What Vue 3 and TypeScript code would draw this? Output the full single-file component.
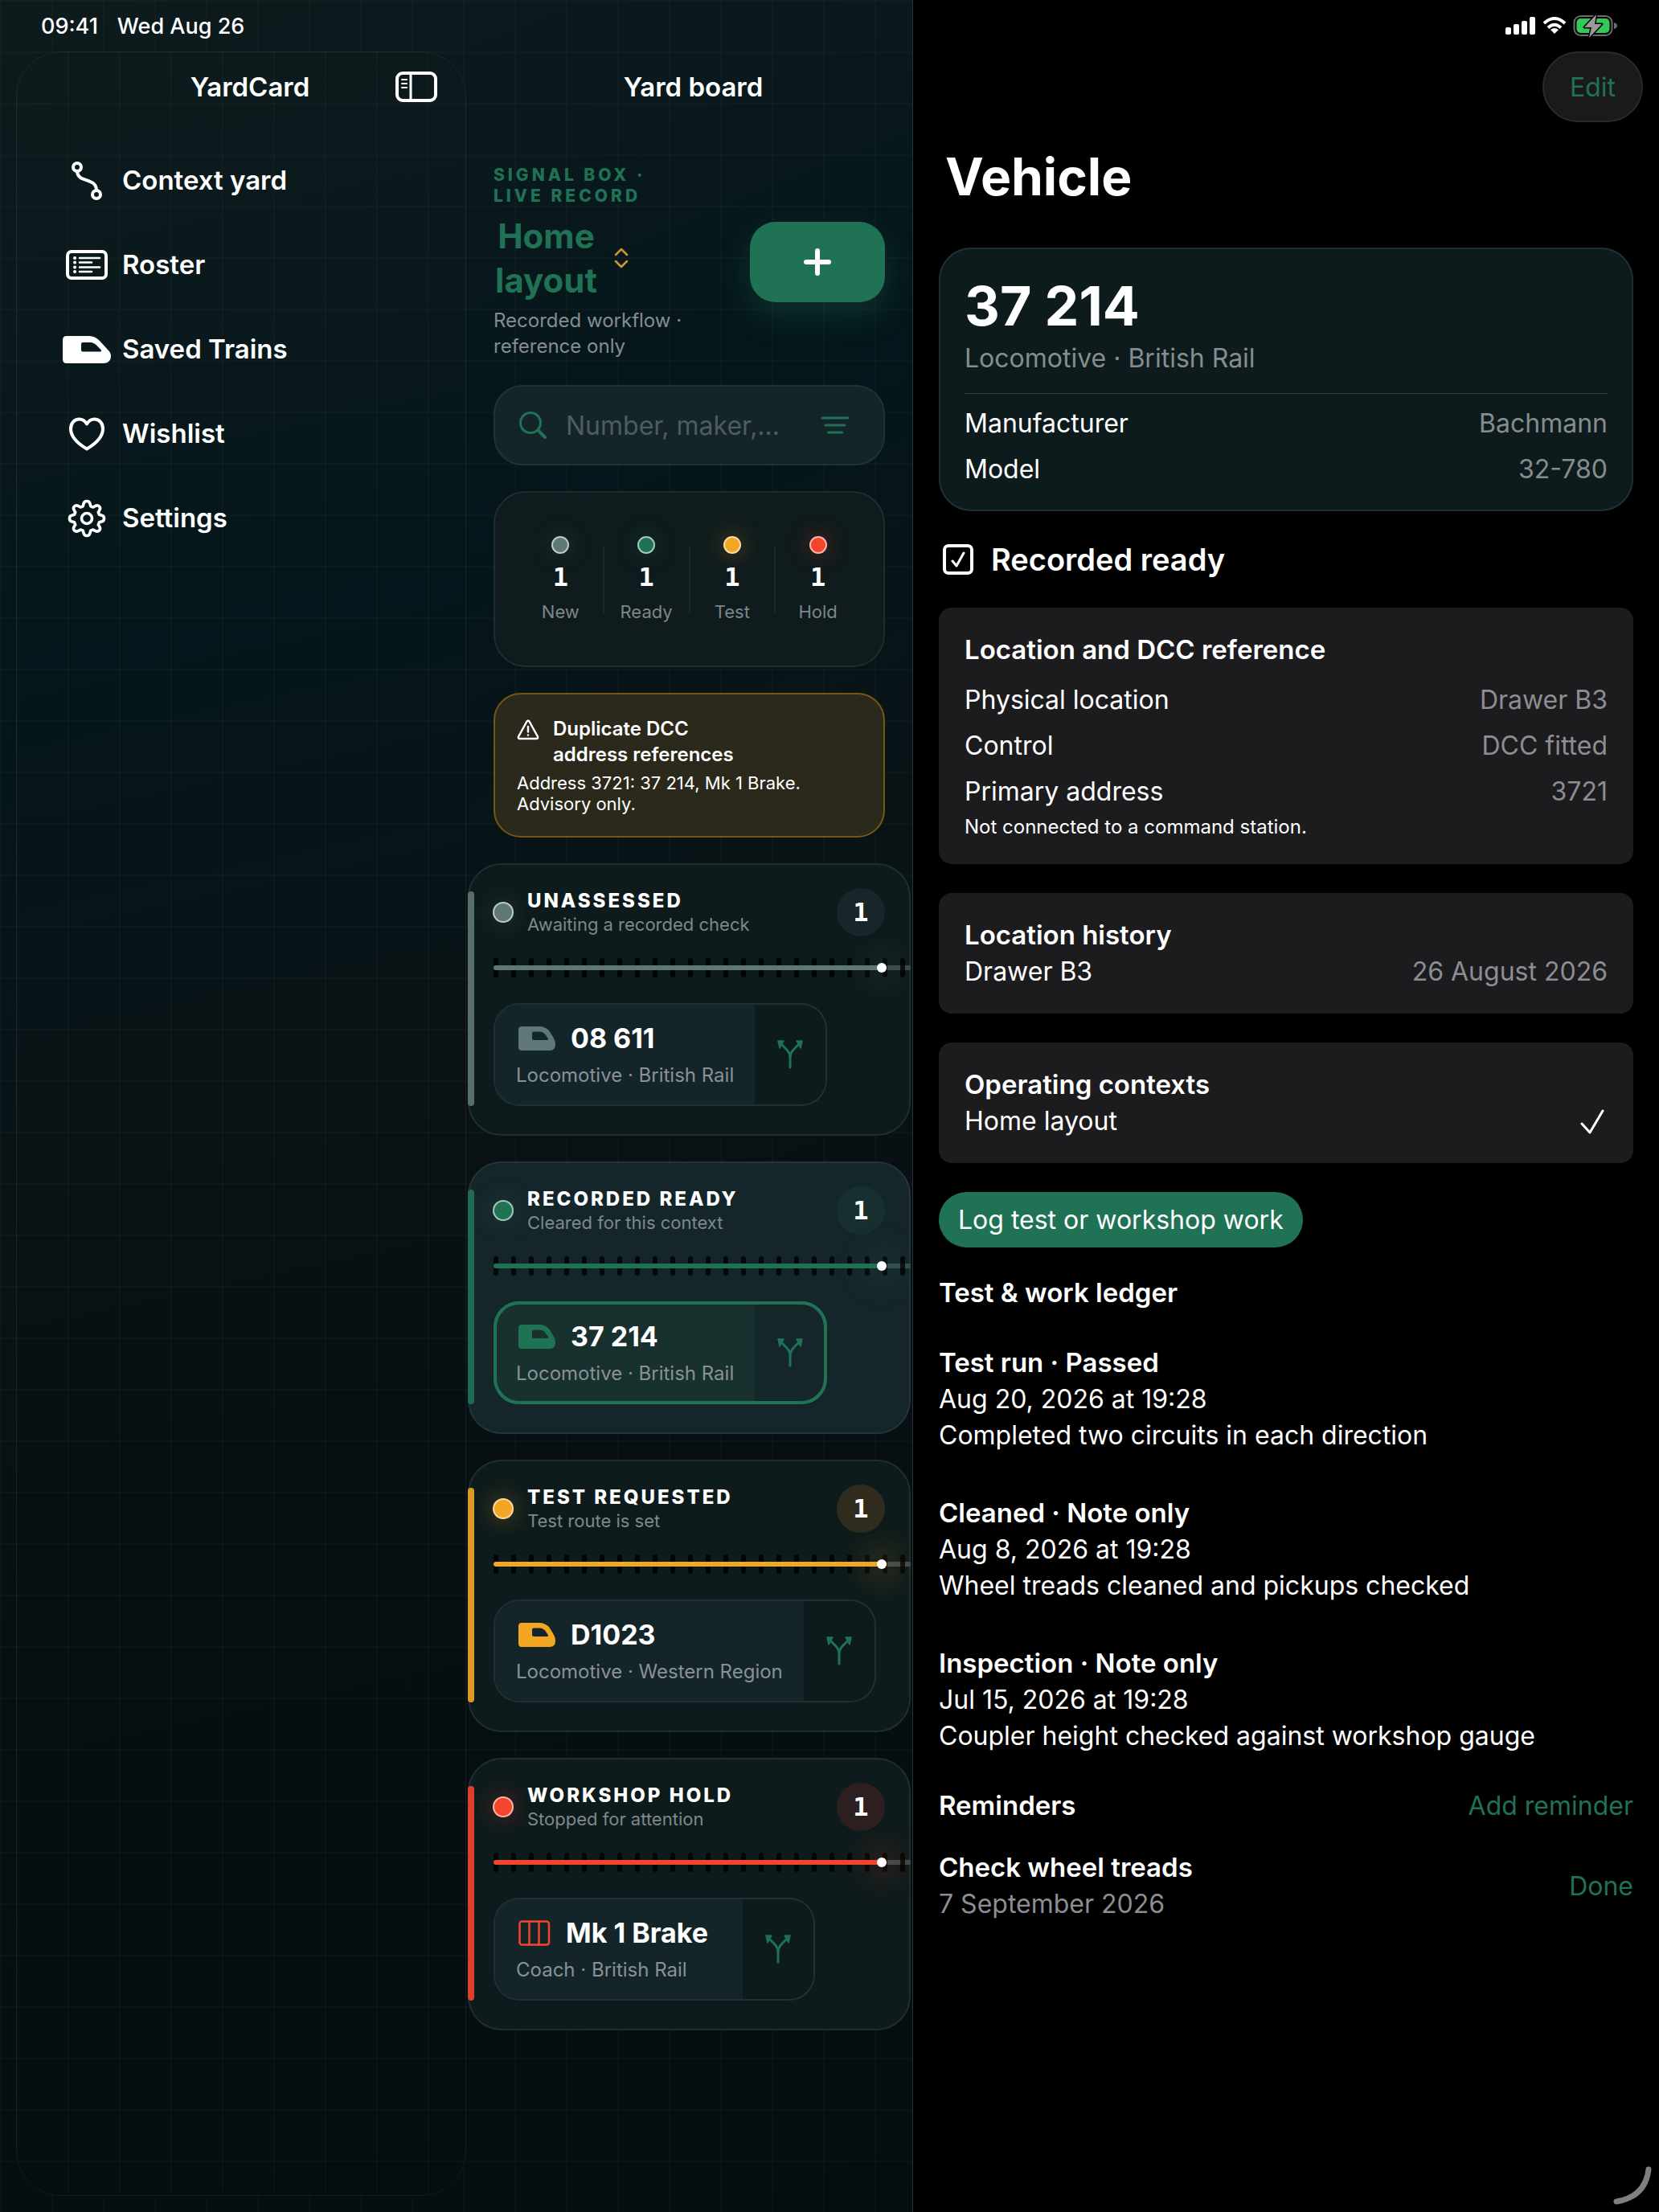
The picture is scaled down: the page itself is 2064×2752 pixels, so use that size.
<script setup lang="ts">
import { ref } from 'vue'

type Tone = 'grey' | 'green' | 'amber' | 'red'

interface Vehicle {
  number: string
  detail: string
  kind: 'loco' | 'coach'
}

interface Lane {
  title: string
  note: string
  short: string
  tone: Tone
  selected: boolean
  vehicle: Vehicle
}

const navItems = [
  { id: 'route', label: 'Context yard' },
  { id: 'roster', label: 'Roster' },
  { id: 'train', label: 'Saved Trains' },
  { id: 'heart', label: 'Wishlist' },
  { id: 'gear', label: 'Settings' },
]

const lanes: Lane[] = [
  {
    title: 'UNASSESSED', note: 'Awaiting a recorded check', short: 'New', tone: 'grey', selected: false,
    vehicle: { number: '08 611', detail: 'Locomotive · British Rail', kind: 'loco' },
  },
  {
    title: 'RECORDED READY', note: 'Cleared for this context', short: 'Ready', tone: 'green', selected: true,
    vehicle: { number: '37 214', detail: 'Locomotive · British Rail', kind: 'loco' },
  },
  {
    title: 'TEST REQUESTED', note: 'Test route is set', short: 'Test', tone: 'amber', selected: false,
    vehicle: { number: 'D1023', detail: 'Locomotive · Western Region', kind: 'loco' },
  },
  {
    title: 'WORKSHOP HOLD', note: 'Stopped for attention', short: 'Hold', tone: 'red', selected: false,
    vehicle: { number: 'Mk 1 Brake', detail: 'Coach · British Rail', kind: 'coach' },
  },
]

const reference = [
  { name: 'Physical location', value: 'Drawer B3' },
  { name: 'Control', value: 'DCC fitted' },
  { name: 'Primary address', value: '3721' },
]

const ledger = [
  { title: 'Test run · Passed', when: 'Aug 20, 2026 at 19:28', text: 'Completed two circuits in each direction' },
  { title: 'Cleaned · Note only', when: 'Aug 8, 2026 at 19:28', text: 'Wheel treads cleaned and pickups checked' },
  { title: 'Inspection · Note only', when: 'Jul 15, 2026 at 19:28', text: 'Coupler height checked against workshop gauge' },
]

const query = ref('')
const ready = ref(true)
</script>

<template>
  <div class="app">
    <div class="yard">
      <header class="status">
        <span>09:41</span>
        <span>Wed Aug 26</span>
      </header>

      <div class="yard-body">
        <aside class="sidebar">
          <div class="sidebar-head">
            <h2 class="bar-title sidebar-title">YardCard</h2>
            <button class="plain toggle" type="button" aria-label="Toggle sidebar">
              <svg width="52" height="42" viewBox="0 0 52 42" fill="none" stroke="#fff" stroke-linecap="round">
                <rect x="2" y="4" width="48" height="34" rx="7" stroke-width="4" />
                <path d="M19 4v34" stroke-width="3" />
                <path d="M8 12h6M8 17h6M8 22h6" stroke-width="2" />
              </svg>
            </button>
          </div>
          <nav class="nav">
            <a v-for="item in navItems" :key="item.id" class="nav-item" href="#">
              <span class="nav-icon">
                <svg v-if="item.id === 'route'" width="40" height="48" viewBox="0 0 40 48" fill="none" stroke="#fff" stroke-width="4">
                  <circle cx="8" cy="7" r="5" />
                  <circle cx="32" cy="41" r="5" />
                  <path d="M8 12c0 15 24 7 24 24" />
                </svg>
                <svg v-else-if="item.id === 'roster'" width="52" height="42" viewBox="0 0 52 42" fill="none" stroke="#fff" stroke-linecap="round">
                  <rect x="2" y="4" width="48" height="33" rx="5" stroke-width="4" />
                  <path d="M17 12h25M17 17.500h15M17 23.500h25M17 29h15" stroke-width="2.500" />
                  <path d="M11 12h.1M11 17.500h.1M11 23.500h.1M11 29h.1" stroke-width="4" />
                </svg>
                <svg v-else-if="item.id === 'train'" width="60" height="34" viewBox="0 0 60 34" fill="#fff">
                  <path fill-rule="evenodd" d="M5 0H33C38 0 42 2 46 6L56 17C59 20 60 22 60 25C60 31 56 34 50 34H5Q0 34 0 29V5Q0 0 5 0ZM25 8Q23 8 23 10V17.500Q23 19.500 25 19.500H46.500Q49 19 47.500 17L42 11.500Q38.500 8 34.500 8Z" />
                </svg>
                <svg v-else-if="item.id === 'heart'" width="46" height="42" viewBox="0 0 46 42" fill="none" stroke="#fff" stroke-width="4" stroke-linejoin="round">
                  <path d="M23 39.500C12 33 3 24.500 3 14.500C3 7.500 7.500 2.500 13.500 2.500C17.500 2.500 21 5 23 8.500C25 5 28.500 2.500 32.500 2.500C38.500 2.500 43 7.500 43 14.500C43 24.500 34 33 23 39.500Z" />
                </svg>
                <svg v-else width="48" height="48" viewBox="0 0 48 48" fill="none" stroke="#fff" stroke-width="3.600" stroke-linejoin="round">
                  <path d="M20 6Q20.500 2.500 24 2.500T28 6L28.800 8.800L31.800 10L34.300 8.600Q37.500 7 39.500 9T39.800 13.700L38.200 16.200L39.400 19.200L42.200 20Q45.500 20.500 45.500 24T42.200 28L39.400 28.800L38.200 31.800L39.800 34.300Q41.500 37 39.500 39T34.300 39.400L31.800 38L28.800 39.200L28 42Q27.500 45.500 24 45.500T20 42L19.200 39.200L16.200 38L13.700 39.400Q10.500 41 8.500 39T8.200 34.300L9.800 31.800L8.600 28.800L5.800 28Q2.500 27.500 2.500 24T5.800 20L8.600 19.200L9.800 16.200L8.200 13.700Q6.500 11 8.500 9T13.700 8.600L16.200 10L19.200 8.800Z" />
                  <circle cx="24" cy="24" r="6.500" />
                </svg>
              </span>
              {{ item.label }}
            </a>
          </nav>
        </aside>

        <main class="board">
          <h1 class="bar-title board-title">Yard board</h1>

          <section class="intro">
            <div>
              <p class="eyebrow">SIGNAL BOX ·<br>LIVE RECORD</p>
              <button class="plain context" type="button">
                <span>Home<br>layout</span>
                <svg width="20" height="26" viewBox="0 0 20 26" fill="none" stroke="#c9973c" stroke-width="2.500" stroke-linecap="round" stroke-linejoin="round">
                  <path d="M3 9l7-7 7 7M3 17l7 7 7-7" />
                </svg>
              </button>
              <p class="caption muted">Recorded workflow ·<br>reference only</p>
            </div>
            <button class="add" type="button" aria-label="Add vehicle">
              <svg width="36" height="36" viewBox="0 0 36 36" stroke="#fff" stroke-width="6" stroke-linecap="round">
                <path d="M18 4v28M4 18h28" />
              </svg>
            </button>
          </section>

          <form class="search" @submit.prevent>
            <svg width="34" height="34" viewBox="0 0 34 34" fill="none" stroke="#207255" stroke-width="3" stroke-linecap="round">
              <circle cx="14" cy="14" r="12.500" />
              <path d="M23.500 23.500l8.500 8.500" stroke-width="4" />
            </svg>
            <input v-model="query" type="text" placeholder="Number, maker,…" aria-label="Search the yard">
            <button class="plain" type="button" aria-label="Filter">
              <svg width="36" height="24" viewBox="0 0 36 24" stroke="#207255" stroke-width="3" stroke-linecap="round">
                <path d="M2 3h32M6 12h24M9.500 21h17" />
              </svg>
            </button>
          </form>

          <dl class="stats">
            <div v-for="lane in lanes" :key="lane.short" class="stat">
              <dt>{{ lane.short }}</dt>
              <dd>1</dd>
              <span class="lamp small" :class="lane.tone"></span>
            </div>
          </dl>

          <section class="alert">
            <h3>
              <svg width="28" height="26" viewBox="0 0 28 26" fill="none" stroke="#fff" stroke-width="2.500" stroke-linecap="round" stroke-linejoin="round">
                <path d="M12.500 2.500Q14 .5 15.500 2.500L26 21.500Q26.500 24 24.500 24H3.500Q1.500 24 2 21.500Z" />
                <path d="M14 9v6.500M14 19.500v.1" />
              </svg>
              <span>Duplicate DCC<br>address references</span>
            </h3>
            <p>Address 3721: 37 214, Mk 1 Brake.<br>Advisory only.</p>
          </section>

          <section v-for="lane in lanes" :key="lane.title" class="lane" :class="[lane.tone, { selected: lane.selected }]">
            <header class="lane-head">
              <span class="lamp" :class="lane.tone"></span>
              <div class="lane-text">
                <h3>{{ lane.title }}</h3>
                <p>{{ lane.note }}</p>
              </div>
              <span class="badge">1</span>
            </header>
            <div class="rail">
              <div class="ties"><i v-for="n in 24" :key="n"></i></div>
              <div class="run"></div>
            </div>
            <div class="chip">
              <button class="plain chip-main" type="button">
                <span class="chip-title">
                  <svg v-if="lane.vehicle.kind === 'loco'" class="tint" width="52" height="32" viewBox="0 0 52 32">
                    <path fill-rule="evenodd" d="M7 1H29C34 1 38 3 41 6L46.500 15Q49 19 49 23Q49 31 42 31H7Q3 31 3 27V5Q3 1 7 1ZM22 7.500Q20 7.500 20 9.500V16Q20 18 22 18H38.500Q41 18 39.500 15.500L36 10.500Q33 7.500 30 7.500Z" />
                  </svg>
                  <svg v-else class="tint-line" width="46" height="32" viewBox="0 0 46 32" fill="none" stroke-width="2.500">
                    <rect x="4.500" y="1.500" width="36.500" height="29" rx="3" />
                    <path d="M16.500 1.500v29M28.500 1.500v29" />
                  </svg>
                  {{ lane.vehicle.number }}
                </span>
                <span class="chip-detail">{{ lane.vehicle.detail }}</span>
              </button>
              <button class="plain chip-move" type="button" aria-label="Move to another lane">
                <svg width="32" height="36" viewBox="0 0 32 36" fill="none" stroke="#207255" stroke-width="3" stroke-linecap="round">
                  <path d="M16 34V22Q16 16 11 11L6 6M16 22Q16 16 21 11L26 6" />
                  <path d="M1 1H8L3 10ZM31 1H24L29 10Z" fill="#207255" stroke-width="1.500" stroke-linejoin="round" />
                </svg>
              </button>
            </div>
          </section>
        </main>
      </div>
    </div>

    <article class="detail">
      <div class="status status-right">
        <svg width="38" height="24" viewBox="0 0 38 24" fill="#fff">
          <rect x="0" y="14" width="7" height="9" rx="2" />
          <rect x="10" y="10" width="7" height="13" rx="2" />
          <rect x="20" y="6" width="7" height="17" rx="2" />
          <rect x="30" y="1" width="7" height="22" rx="2" />
        </svg>
        <svg width="30" height="22" viewBox="0 0 30 22" fill="none" stroke="#fff" stroke-width="4">
          <path d="M2 8Q15-4 28 8M7 13.500Q15 6 23 13.500" />
          <path d="M15 21l-5-5q5-4 10 0z" fill="#fff" stroke="none" />
        </svg>
        <svg width="56" height="34" viewBox="0 0 56 34">
          <rect x="1.500" y="5" width="47" height="24" rx="8" fill="none" stroke="#6b6b6b" stroke-width="2" />
          <rect x="4.500" y="8" width="41" height="18" rx="5" fill="#34c759" />
          <path d="M51 13q4 1 4 4t-4 4z" fill="#6b6b6b" />
          <path d="M29 3L14 19h9l-3 13L36 15h-9z" fill="#9a9a9a" stroke="#000" stroke-width="3" paint-order="stroke" stroke-linejoin="round" />
        </svg>
      </div>

      <div class="toolbar">
        <button class="edit" type="button">Edit</button>
      </div>
      <h1 class="page-title">Vehicle</h1>

      <div class="stack">
        <section class="hero">
          <h2>37 214</h2>
          <p class="muted">Locomotive · British Rail</p>
          <dl class="rows hero-rows">
            <div><dt>Manufacturer</dt><dd>Bachmann</dd></div>
            <div><dt>Model</dt><dd>32-780</dd></div>
          </dl>
        </section>

        <label class="ready">
          <span class="tick">
            <input v-model="ready" type="checkbox">
            <svg v-if="ready" width="18" height="20" viewBox="0 0 18 20" fill="none" stroke="#fff" stroke-width="3" stroke-linecap="round" stroke-linejoin="round">
              <path d="M2 12l5 6L16 2" />
            </svg>
          </span>
          Recorded ready
        </label>

        <section class="card">
          <h3>Location and DCC reference</h3>
          <dl class="rows reference-rows">
            <div v-for="row in reference" :key="row.name"><dt>{{ row.name }}</dt><dd>{{ row.value }}</dd></div>
          </dl>
          <p class="caption">Not connected to a command station.</p>
        </section>

        <section class="card">
          <h3>Location history</h3>
          <dl class="rows">
            <div><dt>Drawer B3</dt><dd>26 August 2026</dd></div>
          </dl>
        </section>

        <section class="card">
          <h3>Operating contexts</h3>
          <div class="choice">
            <span>Home layout</span>
            <svg width="36" height="32" viewBox="0 0 36 32" fill="none" stroke="#fff" stroke-width="3" stroke-linecap="round" stroke-linejoin="round">
              <path d="M4 19l10 11L30 3" />
            </svg>
          </div>
        </section>

        <button class="log" type="button">Log test or workshop work</button>
      </div>

      <div class="records">
        <h3>Test &amp; work ledger</h3>
        <section v-for="entry in ledger" :key="entry.title" class="entry">
          <h4>{{ entry.title }}</h4>
          <p>{{ entry.when }}</p>
          <p>{{ entry.text }}</p>
        </section>
        <div class="split">
          <h3>Reminders</h3>
          <button class="plain link" type="button">Add reminder</button>
        </div>
        <div class="split">
          <div>
            <h4>Check wheel treads</h4>
            <p class="date">7 September 2026</p>
          </div>
          <button class="plain link" type="button">Done</button>
        </div>
      </div>

      <svg class="grip" width="48" height="48" viewBox="0 0 48 48" fill="none" stroke="#808080" stroke-width="7" stroke-linecap="round">
        <path d="M44 4Q40 38 4 44" />
      </svg>
    </article>
  </div>
</template>

<style>
body {
  background: #000;
}
</style>

<style scoped>
.app {
  display: grid;
  grid-template-columns: minmax(0, 71fr) minmax(0, 58fr);
  min-height: 100vh;
  color: #fff;
  font-family: Inter, "Liberation Sans", sans-serif;
  font-size: 32px;
  line-height: 45px;
}

h1, h2, h3, h4, p, dl, dd {
  margin: 0;
  font-size: inherit;
}

h1, h2, h3, h4 {
  font-size: 33px;
  font-weight: 600;
}

button, input {
  font: inherit;
  color: inherit;
}

svg {
  display: block;
  flex: none;
}

.plain {
  padding: 0;
  border: 0;
  background: none;
}

.muted {
  color: #868d90;
}

.caption {
  font-size: 24px;
  line-height: 32px;
}

.status {
  display: flex;
  align-items: center;
  gap: 24px;
  height: 64px;
  padding: 0 51px;
  font-size: 27px;
  font-weight: 500;
}

/* Yard side */
.yard, .sidebar {
  --sweep: 158deg;
  background:
    repeating-linear-gradient(to right, #ffffff05 0 2px, transparent 2px 64px),
    repeating-linear-gradient(to bottom, #ffffff05 0 2px, transparent 2px 64px),
    linear-gradient(var(--sweep), #0e1b1d 0%, #04161b 28%, #0a1215 50%, #070f12 65%, #050d10 100%);
}

.yard {
  display: flex;
  flex-direction: column;
  border-right: 1px solid #2a3436;
}

.yard-body {
  display: flex;
  flex: 1;
}

.sidebar {
  --sweep: 168deg;
  flex: 0 0 560px;
  box-sizing: border-box;
  margin: 0 0 20px 20px;
  border-radius: 56px;
  box-shadow: inset 0 0 0 1px #ffffff10;
}

.sidebar-head {
  display: grid;
  align-items: center;
  height: 88px;
  padding: 0 36px;
}

.sidebar-head > * {
  grid-area: 1 / 1;
}

.bar-title {
  text-align: center;
}

.sidebar-title {
  padding-left: 22px;
}

.toggle {
  justify-self: end;
}

.nav {
  display: flex;
  flex-direction: column;
  padding: 20px 53px;
}

.nav-item {
  display: flex;
  align-items: center;
  gap: 9px;
  height: 105px;
  color: inherit;
  font-size: 33px;
  font-weight: 600;
  text-decoration: none;
}

.nav-icon {
  display: flex;
  justify-content: center;
  width: 70px;
}

.board {
  flex: 1;
  display: flex;
  flex-direction: column;
  gap: 32px;
  min-width: 0;
  padding: 0 2px 64px;
}

.board > * {
  margin-left: 32px;
  margin-right: 32px;
}

.board-title {
  height: 88px;
  margin-bottom: 21px;
  padding-left: 10px;
  line-height: 88px;
}

.intro {
  display: flex;
  align-items: center;
  justify-content: space-between;
}

.eyebrow {
  color: #207255;
  font-size: 21px;
  font-weight: 800;
  line-height: 26px;
  letter-spacing: 4px;
}

.context {
  display: flex;
  align-items: center;
  gap: 20px;
  padding: 9px 2px 7px;
  color: #207255;
  font-size: 42px;
  font-weight: 700;
  line-height: 55px;
}

.add {
  display: grid;
  place-items: center;
  width: 168px;
  height: 100px;
  border: 0;
  border-radius: 32px;
  background: #207255;
  box-shadow: 0 16px 40px #2072554d;
}

.search {
  display: flex;
  align-items: center;
  gap: 24px;
  box-sizing: border-box;
  height: 100px;
  padding: 0 42px 0 30px;
  border: 2px solid #213235;
  border-radius: 36px;
  background: #14252a;
}

.search input {
  flex: 1;
  min-width: 0;
  padding: 0;
  border: 0;
  outline: 0;
  background: none;
}

.search input::placeholder {
  color: #4f5c60;
  opacity: 1;
}

.stats {
  display: flex;
  align-items: center;
  box-sizing: border-box;
  height: 219px;
  padding: 0 28px;
  border: 2px solid #1f2d2f;
  border-radius: 40px;
  background: #0f1b1d;
}

.stat {
  display: flex;
  flex: 1;
  flex-direction: column-reverse;
  align-items: center;
  position: relative;
}

.stat + .stat::before {
  content: "";
  position: absolute;
  left: -1px;
  top: 12px;
  bottom: 12px;
  width: 2px;
  background: #1c2a2d;
}

.stat dt {
  color: #7d8688;
  font-size: 22px;
  line-height: 28px;
}

.stat dd, .badge {
  font-family: "DejaVu Sans Mono", monospace;
  font-size: 32px;
  font-weight: 700;
}

.stat dd {
  line-height: 40px;
  margin: 9px 0;
}

.lamp {
  flex: none;
  box-sizing: border-box;
  width: 26px;
  height: 26px;
  border: 2px solid #ffffff99;
  border-radius: 50%;
  background: var(--tone);
  background-clip: border-box;
  box-shadow: 0 0 28px var(--glow);
}

.lamp.small {
  width: 22px;
  height: 22px;
}

.grey {
  --tone: #5f7877;
  --glow: #5f787755;
  --badge: #18262a;
}

.green {
  --tone: #207255;
  --glow: #20725566;
  --badge: #17302f;
}

.amber {
  --tone: #f2a623;
  --glow: #f2a62366;
  --badge: #2f2c1e;
}

.red {
  --tone: #f2452b;
  --glow: #f2452b66;
  --badge: #2d1f20;
}

.alert {
  padding: 27px;
  border: 2px solid #785713;
  border-radius: 34px;
  background: #2a291b;
}

.alert h3 {
  display: flex;
  gap: 17px;
  font-size: 24px;
  line-height: 32px;
}

.alert h3 svg {
  margin-top: 4px;
}

.alert p {
  margin-top: 6px;
  font-size: 22px;
  line-height: 26px;
}

.lane {
  position: relative;
  margin: 0;
  padding: 29px 30px 37px;
  border: 2px solid #1f2e30;
  border-radius: 42px;
  background: #0e1b1c;
}

.lane.selected {
  border-color: #22353a;
  background: #15262b;
}

.lane::before {
  content: "";
  position: absolute;
  left: -2px;
  top: 33px;
  bottom: 35px;
  width: 8px;
  border-radius: 4px;
  background: var(--tone);
  opacity: 0.9;
}

.lane-head {
  display: flex;
  align-items: center;
  gap: 17px;
  margin-left: -1px;
}

.lane-text {
  flex: 1;
}

.lane-text h3 {
  font-size: 24px;
  font-weight: 800;
  line-height: 30px;
  letter-spacing: 3px;
}

.lane-text p {
  color: #7f888a;
  font-size: 22px;
  line-height: 28px;
}

.badge {
  width: 60px;
  border-radius: 50%;
  background: var(--badge);
  line-height: 60px;
  text-align: center;
}

.rail {
  display: grid;
  align-items: center;
  height: 24px;
  margin: 27px -32px 34px 0;
  background: linear-gradient(#3b4b4d, #3b4b4d) center / 100% 6px no-repeat;
}

.rail > * {
  grid-area: 1 / 1;
}

.ties {
  display: flex;
  gap: 16px;
  overflow: hidden;
}

.ties i {
  flex: none;
  width: 6px;
  height: 24px;
  border-radius: 3px;
  background: #000c;
}

.run {
  display: flex;
  align-items: center;
  justify-content: flex-end;
  height: 6px;
  margin-right: 30px;
  border-radius: 3px;
  background: var(--tone);
}

.run::after {
  content: "";
  width: 12px;
  height: 12px;
  border-radius: 50%;
  background: #fff;
  box-shadow: 0 0 40px 8px var(--glow);
}

.chip {
  display: flex;
  width: fit-content;
  margin-left: 2px;
  border-radius: 30px;
  box-shadow: 0 0 0 2px #1f3135;
  overflow: hidden;
}

.selected .chip {
  box-shadow: 0 0 0 2px #207255;
  outline: 4px solid #207255;
  outline-offset: -2px;
}

.chip-main {
  box-sizing: border-box;
  min-width: 308px;
  padding: 20px 26px;
  background: #14252a;
  text-align: left;
}

.selected .chip-main {
  background: #18302e;
}

.chip-title {
  display: flex;
  align-items: center;
  gap: 16px;
  margin-bottom: 8px;
  font-size: 34px;
  font-weight: 700;
  line-height: 44px;
}

.chip-detail {
  display: block;
  color: #8a9196;
  font-size: 24px;
  line-height: 32px;
}

.chip-move {
  display: grid;
  place-items: center;
  width: 88px;
}

.tint {
  fill: var(--tone);
}

.tint-line {
  stroke: var(--tone);
}

/* Vehicle side */
.detail {
  position: relative;
  display: flex;
  flex-direction: column;
  padding: 0 32px 64px;
  background: #000;
}

.status-right {
  gap: 8px;
  justify-content: flex-end;
  padding-right: 19px;
}

.toolbar {
  display: flex;
  justify-content: flex-end;
  margin-right: -12px;
}

.edit {
  height: 88px;
  padding: 0 32px;
  border: 2px solid #2a2a2a;
  border-radius: 44px;
  background: #1a1a1a;
  color: #207255;
}

.page-title {
  margin: 28px 8px 48px;
  font-size: 64px;
  font-weight: 700;
  line-height: 80px;
}

.stack {
  display: flex;
  flex-direction: column;
  align-items: stretch;
  gap: 36px;
}

.hero {
  padding: 30px 30px 28px;
  border: 2px solid #1e3033;
  border-radius: 40px;
  background: #0e1b1d;
}

.hero h2 {
  margin-bottom: 3px;
  font-size: 68px;
  font-weight: 700;
  line-height: 80px;
}

.hero-rows {
  margin-top: 21px;
  padding-top: 14px;
  border-top: 1px solid #2c393b;
}

.rows {
  display: flex;
  flex-direction: column;
  gap: 12px;
}

.rows > div, .choice, .split {
  display: flex;
  align-items: center;
  justify-content: space-between;
}

.rows dd {
  color: #8d8d93;
}

.hero-rows dd {
  color: #868d8e;
}

.ready {
  display: flex;
  align-items: center;
  gap: 22px;
  padding-left: 5px;
  font-size: 38px;
  font-weight: 600;
  line-height: 48px;
}

.tick {
  display: grid;
  place-items: center;
}

.tick > * {
  grid-area: 1 / 1;
}

.tick input {
  appearance: none;
  box-sizing: border-box;
  width: 38px;
  height: 38px;
  margin: 0;
  border: 4px solid #fff;
  border-radius: 7px;
}

.card {
  padding: 30px 32px;
  border-radius: 16px;
  background: #1c1c1e;
}

.reference-rows {
  margin: 17px 0 6px;
}

.log {
  align-self: flex-start;
  height: 69px;
  padding: 0 24px;
  border: 0;
  border-radius: 35px;
  background: #207255;
}

.records {
  display: flex;
  flex-direction: column;
  gap: 32px;
  margin-top: 34px;
}

.entry {
  padding: 10px 0;
}

.link {
  color: #207255;
}

.date {
  color: #8d8d93;
}

.grip {
  position: absolute;
  right: 9px;
  bottom: 9px;
}
</style>
